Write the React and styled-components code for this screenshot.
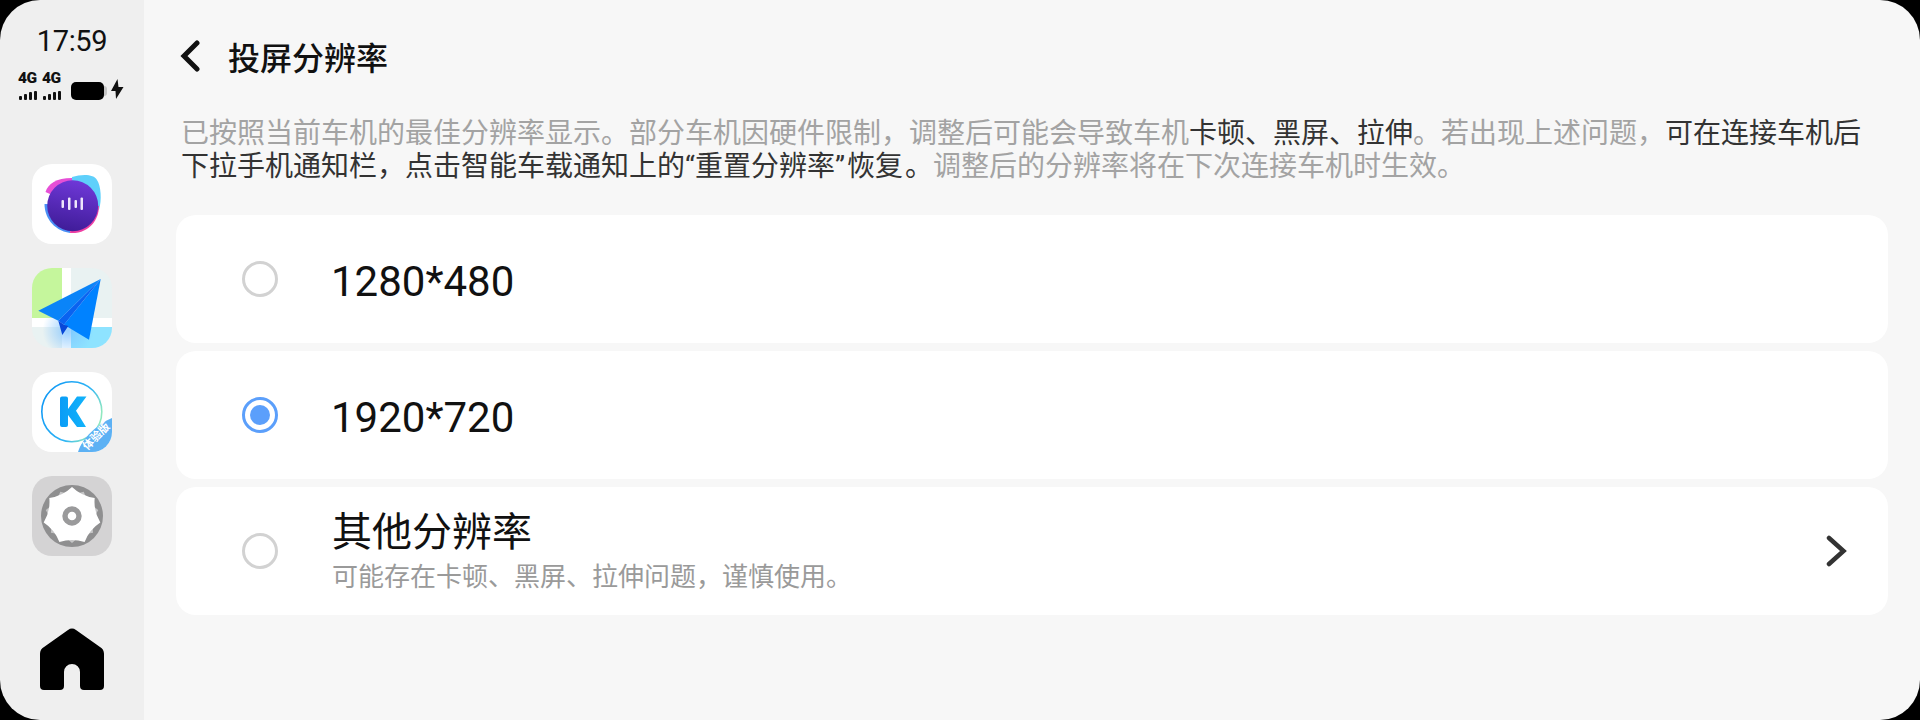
import React from "react";
import styled, { createGlobalStyle } from "styled-components";

const cjk = `Roboto, "Noto Sans CJK SC", sans-serif`;

const Global = createGlobalStyle`
  html, body {
    margin: 0;
    background: #000;
  }
`;

const Screen = styled.div`
  display: flex;
  width: 1920px;
  height: 720px;
  border-radius: 40px;
  overflow: hidden;
  font-family: ${cjk};
`;

const Dock = styled.aside`
  width: 144px;
  flex-shrink: 0;
  background: #efefef;
  display: flex;
  flex-direction: column;
  align-items: center;
`;

const Clock = styled.div`
  margin-top: 25px;
  font-size: 29px;
  line-height: 32px;
  letter-spacing: -0.3px;
  color: #111;
`;

const StatusRow = styled.div`
  margin-top: 15px;
  width: 108px;
  height: 28px;
  display: flex;
  align-items: flex-end;
`;

const Signals = styled.div`
  display: flex;
  gap: 4px;
  height: 100%;
`;

const Signal = styled.div`
  display: flex;
  flex-direction: column;
  justify-content: space-between;
  width: 20px;
`;

const SignalLabel = styled.span`
  font-size: 15.5px;
  line-height: 12px;
  font-weight: 900;
  letter-spacing: -0.4px;
  color: #111;
`;

const Bars = styled.div`
  display: flex;
  align-items: flex-end;
  gap: 2px;
  padding-left: 1px;
`;

const Bar = styled.i`
  width: 3px;
  background: #111;
  border-radius: 1px;
`;

const Battery = styled.div`
  width: 33px;
  height: 18px;
  margin-left: 9px;
  background: #000;
  border-radius: 5px;
  position: relative;
  &::after {
    content: "";
    position: absolute;
    right: -3px;
    top: 4px;
    width: 3px;
    height: 10px;
    background: #c4c4c4;
    border-radius: 0 3px 3px 0;
  }
`;

const Bolt = styled.svg`
  margin: 0 0 1px 7px;
`;

const Apps = styled.div`
  margin-top: 64px;
  display: flex;
  flex-direction: column;
  gap: 24px;
`;

const AppIcon = styled.div`
  width: 80px;
  height: 80px;
  border-radius: 20px;
  background: ${(p) => p.$bg || "#fff"};
  overflow: hidden;
  position: relative;
`;

const TrialBadge = styled.span`
  position: absolute;
  left: 47.5px;
  top: 58.5px;
  width: 33px;
  font-size: 11px;
  line-height: 11px;
  color: #fff;
  font-weight: 700;
  white-space: nowrap;
  transform: rotate(-45deg);
`;

const HomeButton = styled.div`
  margin-top: auto;
  margin-bottom: 28px;
  height: 64px;
`;

const Main = styled.main`
  flex: 1;
  background: #f7f7f7;
  padding: 0 32px;
  display: flex;
  flex-direction: column;
`;

const Header = styled.header`
  height: 112px;
  display: flex;
  align-items: center;
  gap: 27px;
`;

const BackButton = styled.div`
  width: 22px;
  height: 32px;
  margin-left: 3px;
`;

const Title = styled.h1`
  margin: 0;
  font-size: 32px;
  font-weight: 500;
  color: #111;
`;

const Notice = styled.p`
  margin: 5px 0 0 5px;
  font-size: 28px;
  line-height: 33px;
  color: #a3a3a3;
  width: 1700px;
`;

const Strong = styled.span`
  color: #333;
`;

const Kern = styled.span`
  letter-spacing: 2px;
`;

const Options = styled.div`
  margin-top: 32px;
  display: flex;
  flex-direction: column;
  gap: 8px;
`;

const Option = styled.div`
  height: 128px;
  background: #fff;
  border-radius: 20px;
  display: flex;
  align-items: center;
  padding: 0 38px 0 66px;
`;

const Radio = styled.div`
  width: 36px;
  height: 36px;
  box-sizing: border-box;
  border-radius: 50%;
  border: 3px solid ${(p) => (p.$checked ? "#5b9ffb" : "#d2d2d2")};
  display: flex;
  align-items: center;
  justify-content: center;
  flex-shrink: 0;
  &::after {
    content: "";
    width: 20px;
    height: 20px;
    border-radius: 50%;
    background: ${(p) => (p.$checked ? "#5b9ffb" : "transparent")};
  }
`;

const OptionBody = styled.div`
  margin-left: 53px;
  flex: 1;
`;

const OptionLabel = styled.div`
  font-size: ${(p) => (p.$numeric ? "42px" : "40px")};
  line-height: 48px;
  padding: ${(p) => (p.$numeric ? "6px 0 0" : "0 0 0 1px")};
  color: #111;
`;

const OptionHint = styled.div`
  margin: 4px 0 0 1px;
  font-size: 26px;
  line-height: 32px;
  color: #9a9a9a;
`;

const options = [
  { label: "1280*480", numeric: true },
  { label: "1920*720", numeric: true, checked: true },
  { label: "其他分辨率", hint: "可能存在卡顿、黑屏、拉伸问题，谨慎使用。", more: true },
];

const Assistant = () => (
  <AppIcon>
    <svg width="80" height="80" viewBox="0 0 80 80">
      <defs>
        <linearGradient id="asBody" x1="0.6" y1="0" x2="0.4" y2="1">
          <stop offset="0" stopColor="#6f38d8" />
          <stop offset="1" stopColor="#3f1c98" />
        </linearGradient>
      </defs>
      <path d="M40 40V13c10-3 22-3 25 3 4 6 5 20 2 30z" fill="#5fd0fb" />
      <path d="M40 40 13.500 28C16 20 24 14 40 14z" fill="#e64fd6" />
      <path d="M40 40H12.500c0 12 7.500 26 25.500 29z" fill="#4a8ff5" />
      <path d="M40 40l27 2c0 13-9 28-29 27z" fill="#ee3fa3" />
      <circle cx="40.700" cy="41.700" r="25.500" fill="url(#asBody)" />
      <g fill="#eee6fb">
        <rect x="29.500" y="36" width="2.500" height="8" rx="1" />
        <rect x="36" y="33.500" width="2.500" height="12.500" rx="1" />
        <rect x="42.500" y="36" width="2.500" height="8" rx="1" />
        <rect x="48.500" y="33.500" width="2.500" height="12.500" rx="1" />
      </g>
    </svg>
  </AppIcon>
);

const MapApp = () => (
  <AppIcon $bg="#e9f2f2">
    <svg width="80" height="80" viewBox="0 0 80 80">
      <defs>
        <radialGradient id="mapGlow" cx="0.45" cy="0.78" r="0.32">
          <stop offset="0" stopColor="#7cc2ff" stopOpacity=".8" />
          <stop offset="1" stopColor="#7cc2ff" stopOpacity="0" />
        </radialGradient>
      </defs>
      <rect width="30" height="50" fill="#c5f69c" />
      <rect x="39" y="59" width="41" height="21" fill="#8ee3ff" />
      <rect x="30" width="9" height="80" fill="#fff" />
      <rect y="50" width="80" height="9" fill="#fff" />
      <rect width="80" height="80" fill="url(#mapGlow)" />
      <path d="M68.700 11 6.300 42.700l20 10z" fill="#0a84f8" />
      <path d="M68.700 11 32 56.700l25 15z" fill="#0082ff" />
      <path d="M68.700 11 26.300 52.700l5.700 4z" fill="#0a63f0" />
      <path d="M26.300 52.700l4 14.300 6-9-4.300-1.300z" fill="#0848d8" />
    </svg>
  </AppIcon>
);

const KugouApp = () => (
  <AppIcon>
    <svg width="80" height="80" viewBox="0 0 80 80">
      <defs>
        <linearGradient id="kgRing" x1="0" y1="0" x2="1" y2="0.5">
          <stop offset="0" stopColor="#0a93f5" />
          <stop offset="0.7" stopColor="#2fb5f5" />
          <stop offset="1" stopColor="#90e8c0" />
        </linearGradient>
        <linearGradient id="kgLetter" x1="0" y1="0" x2="1" y2="0">
          <stop offset="0" stopColor="#0a9cf6" />
          <stop offset="1" stopColor="#12b4fb" />
        </linearGradient>
      </defs>
      <circle cx="39.800" cy="39.700" r="30" fill="none" stroke="url(#kgRing)" strokeWidth="1.600" />
      <path d="M28 26.500a2 2 0 0 1 2-2h4a2 2 0 0 1 2 2V37l9-12.500h9.500L44 38.700 54 55h-9L36 43v10a2 2 0 0 1-2 2h-4a2 2 0 0 1-2-2z" fill="url(#kgLetter)" />
      <path d="M46 80C50 66 66 52 80 46V70a10 10 0 0 1-10 10z" fill="#5cb1f4" />
    </svg>
    <TrialBadge>体验版</TrialBadge>
  </AppIcon>
);

// seven pointed star with hollow sides, for the settings gear
const star = (rotate, tip, valley) => {
  const at = (deg, r) => {
    const a = (deg * Math.PI) / 180;
    return `${(40 + r * Math.cos(a)).toFixed(1)} ${(40 + r * Math.sin(a)).toFixed(1)}`;
  };
  const step = 360 / 7;
  let d = `M${at(rotate, tip)}`;
  for (let i = 0; i < 7; i++) {
    const from = rotate + i * step;
    d += `Q${at(from + step / 2, valley)} ${at(from + step, tip)}`;
  }
  return d + "z";
};

const SettingsApp = () => (
  <AppIcon $bg="#d4d3d4">
    <svg width="80" height="80" viewBox="0 0 80 80">
      <circle cx="40" cy="40" r="31" fill="#8f8f90" />
      <path d={star(-90 + 180 / 7, 27, 20)} fill="#c6c6c7" />
      <path d={star(-90, 29, 22)} fill="#fff" />
      <circle cx="40" cy="40" r="7" fill="none" stroke="#9a9a9b" strokeWidth="5.400" />
    </svg>
  </AppIcon>
);

const App = () => (
  <>
    <Global />
    <Screen>
      <Dock>
        <Clock>17:59</Clock>
        <StatusRow>
          <Signals>
            {[0, 1].map((n) => (
              <Signal key={n}>
                <SignalLabel>4G</SignalLabel>
                <Bars>
                  {[4, 6, 8, 9.5].map((h) => (
                    <Bar key={h} style={{ height: h }} />
                  ))}
                </Bars>
              </Signal>
            ))}
          </Signals>
          <Battery />
          <Bolt width="13" height="20" viewBox="0 0 13 20">
            <path d="M6.500 0 0 12h4.500L5 20l7.500-12h-5z" fill="#111" />
          </Bolt>
        </StatusRow>
        <Apps>
          <Assistant />
          <MapApp />
          <KugouApp />
          <SettingsApp />
        </Apps>
        <HomeButton>
          <svg width="64" height="64" viewBox="0 0 64 64">
            <path d="M28 2a7 7 0 0 1 8 0l24 17a8 8 0 0 1 4 7v32a4 4 0 0 1-4 4H44a4 4 0 0 1-4-4V44a8 8 0 0 0-16 0v14a4 4 0 0 1-4 4H4a4 4 0 0 1-4-4V26a8 8 0 0 1 4-7z" fill="#000" />
          </svg>
        </HomeButton>
      </Dock>
      <Main>
        <Header>
          <BackButton>
            <svg width="22" height="32" viewBox="0 0 22 32">
              <path d="M18 3 5 16l13 13" fill="none" stroke="#111" strokeWidth="5" strokeLinecap="round" />
            </svg>
          </BackButton>
          <Title>投屏分辨率</Title>
        </Header>
        <Notice>
          已按照当前车机的最佳分辨率显示。部分车机因硬件限制，调整后可能会导致车机<Strong>卡顿、黑屏、拉伸</Strong>。若出现上述问题，<Strong>可在连接车机后下拉手机通知栏，点击智能车载通知上的“重置分辨率<Kern>”</Kern>恢<Kern>复</Kern>。</Strong>调整后的分辨率将在下次连接车机时生效。
        </Notice>
        <Options>
          {options.map((o) => (
            <Option key={o.label}>
              <Radio $checked={o.checked} />
              <OptionBody>
                <OptionLabel $numeric={o.numeric}>{o.label}</OptionLabel>
                {o.hint && <OptionHint>{o.hint}</OptionHint>}
              </OptionBody>
              {o.more && (
                <svg width="24" height="34" viewBox="0 0 24 34">
                  <path d="M3 4 17.500 17 3 30" fill="none" stroke="#333" strokeWidth="4.500" strokeLinecap="round" />
                </svg>
              )}
            </Option>
          ))}
        </Options>
      </Main>
    </Screen>
  </>
);

export default App;
